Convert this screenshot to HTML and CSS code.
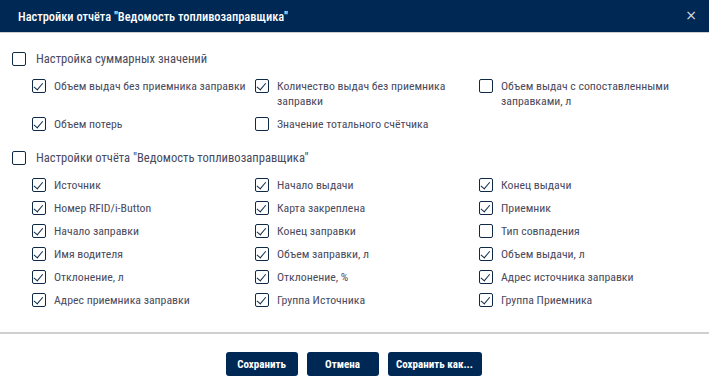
FILE: index.html
```html
<!DOCTYPE html>
<html lang="ru">
<head>
<meta charset="utf-8">
<title>Настройки отчёта</title>
<link rel="stylesheet" href="styles.css">
</head>
<body>
<div class="dialog">
  <div class="header">
    <span class="title">Настройки отчёта "Ведомость топливозаправщика"</span>
    <span class="close">×</span>
  </div>
  <div class="content">
    <div class="section">
      <label class="group-head"><span class="cb"></span><span class="lbl">Настройка суммарных значений</span></label>
      <div class="grid">
        <label class="item"><span class="cb on"></span><span class="lbl">Объем выдач без приемника заправки</span></label>
        <label class="item"><span class="cb on"></span><span class="lbl">Количество выдач без приемника заправки</span></label>
        <label class="item"><span class="cb"></span><span class="lbl">Объем выдач с сопоставленными заправками, л</span></label>
        <label class="item"><span class="cb on"></span><span class="lbl">Объем потерь</span></label>
        <label class="item"><span class="cb"></span><span class="lbl">Значение тотального счётчика</span></label>
      </div>
    </div>
    <div class="section">
      <label class="group-head"><span class="cb"></span><span class="lbl">Настройки отчёта "Ведомость топливозаправщика"</span></label>
      <div class="grid">
        <label class="item"><span class="cb on"></span><span class="lbl">Источник</span></label>
        <label class="item"><span class="cb on"></span><span class="lbl">Начало выдачи</span></label>
        <label class="item"><span class="cb on"></span><span class="lbl">Конец выдачи</span></label>
        <label class="item"><span class="cb on"></span><span class="lbl">Номер RFID/i-Button</span></label>
        <label class="item"><span class="cb on"></span><span class="lbl">Карта закреплена</span></label>
        <label class="item"><span class="cb on"></span><span class="lbl">Приемник</span></label>
        <label class="item"><span class="cb on"></span><span class="lbl">Начало заправки</span></label>
        <label class="item"><span class="cb on"></span><span class="lbl">Конец заправки</span></label>
        <label class="item"><span class="cb"></span><span class="lbl">Тип совпадения</span></label>
        <label class="item"><span class="cb on"></span><span class="lbl">Имя водителя</span></label>
        <label class="item"><span class="cb on"></span><span class="lbl">Объем заправки, л</span></label>
        <label class="item"><span class="cb on"></span><span class="lbl">Объем выдачи, л</span></label>
        <label class="item"><span class="cb on"></span><span class="lbl">Отклонение, л</span></label>
        <label class="item"><span class="cb on"></span><span class="lbl">Отклонение, %</span></label>
        <label class="item"><span class="cb on"></span><span class="lbl">Адрес источника заправки</span></label>
        <label class="item"><span class="cb on"></span><span class="lbl">Адрес приемника заправки</span></label>
        <label class="item"><span class="cb on"></span><span class="lbl">Группа Источника</span></label>
        <label class="item"><span class="cb on"></span><span class="lbl">Группа Приемника</span></label>
      </div>
    </div>
  </div>
  <div class="footer">
    <button class="btn">Сохранить</button>
    <button class="btn">Отмена</button>
    <button class="btn wide">Сохранить как...</button>
  </div>
</div>
</body>
</html>
```
FILE: styles.css
```css
* { box-sizing: border-box; }
html, body { margin: 0; padding: 0; background: #fff; }
body {
  font-family: "Roboto Condensed", Roboto, "Liberation Sans", sans-serif;
  width: 709px;
  height: 384px;
  overflow: hidden;
}
.dialog { width: 709px; }
.header {
  height: 33px;
  background: #002855;
  border-bottom: 1px solid #cfcfcf;
  display: flex;
  align-items: center;
  justify-content: space-between;
  padding: 0 12px 0 18px;
}
.title {
  color: #fff;
  font-size: 12.4px;
  font-weight: 500;
}
.close {
  color: #d8dde6;
  font-size: 14px;
  line-height: 1;
  margin-top: -3px;
  font-family: "DejaVu Sans", sans-serif;
}
.content {
  padding: 18px 0 0 12px;
  height: 301px;
  border-bottom: 2px solid #d0d0d0;
}
.section { margin-bottom: 18px; }
.group-head {
  display: flex;
  align-items: center;
  gap: 10px;
  height: 15px;
  margin-bottom: 13px;
}
.lbl {
  font-size: 11.8px;
  line-height: 15px;
  color: #4a4a5e;
}
.group-head .lbl { font-size: 12.6px; }
.grid {
  display: grid;
  grid-template-columns: 223px 224px 224px;
  row-gap: 8px;
  padding-left: 20px;
}
.item {
  display: flex;
  align-items: flex-start;
  gap: 8px;
  padding-right: 5px;
}
.cb {
  flex: none;
  width: 14px;
  height: 14px;
  border: 1.5px solid #0e2a47;
  border-radius: 2px;
  position: relative;
  background: #fff;
}
.cb.on::after {
  content: "";
  position: absolute;
  left: 3px;
  top: 0.5px;
  width: 4px;
  height: 7.5px;
  border-right: 1.5px solid #0e2a47;
  border-bottom: 1.5px solid #0e2a47;
  transform: rotate(40deg);
}
.footer {
  display: flex;
  justify-content: center;
  gap: 9px;
  padding-top: 18px;
  padding-right: 2px;
}
.btn {
  height: 24px;
  width: 72px;
  background: #002855;
  color: #fff;
  border: none;
  border-radius: 3px;
  font-family: "Roboto Condensed", Roboto, sans-serif;
  font-size: 11px;
  font-weight: 700;
  padding: 0;
}
.btn.wide { width: 94px; }
```
